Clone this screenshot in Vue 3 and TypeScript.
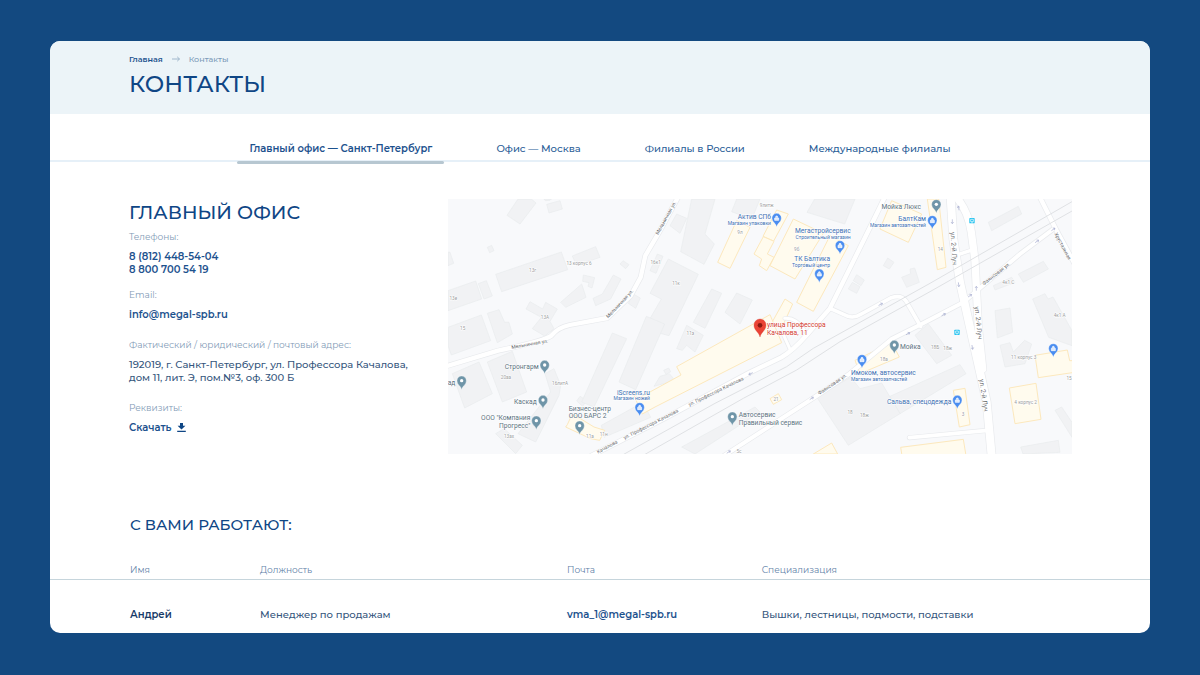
<script setup lang="ts">
import { ref } from 'vue'

interface Label {
  x: number
  y: number
  text: string
  kind: 'shop' | 'shop small' | 'place' | 'house' | 'street' | 'target'
  anchor?: 'start' | 'middle' | 'end'
  turn?: number
}

interface Pin {
  x: number
  y: number
  shop?: boolean
}

const tabs: string[] = [
  'Главный офис — Санкт-Петербург',
  'Офис — Москва',
  'Филиалы в России',
  'Международные филиалы',
]
const activeTab = ref<number>(0)

const staff = [
  {
    name: 'Андрей',
    role: 'Менеджер по продажам',
    mail: 'vma_1@megal-spb.ru',
    area: 'Вышки, лестницы, подмости, подставки',
  },
]

const greyHouses: string[] = [
  '210,0 250,0 264,12 216,75 177,49',
  '296,16 336,5 343,30 303,42',
  '288,0 310,0 306,4 292,5',
  '118,145 131,139 138,155 125,161',
  '0,160 6,160 17,193 0,200',
  '143,226 340,159 359,212 161,278',
  '373,171 443,143 456,175 385,199',
  '0,275 83,246 101,300 0,335',
  '91,254 115,245 133,291 108,300',
  '338,310 401,255 414,295 353,325',
  '406,228 440,236 432,267 420,262 423,251 404,247',
  '435,298 463,285 496,228 519,240 488,300 443,320',
  '516,195 525,185 543,197 533,209',
  '606,215 628,165 645,172 624,223',
  '541,313 556,285 577,297 563,328',
  '246,308 284,330 293,310 328,330 306,367 318,389 290,411 253,389 280,355 234,330',
  '118,343 153,332 170,370 183,370 193,405 148,431',
  '0,385 100,348 128,425 10,468 0,440',
  '666,80 686,45 716,58 696,103',
  '731,0 801,0 771,105 799,135 768,196 698,158',
  '866,0 936,0 911,61 851,38',
  '1100,0 1221,0 1190,75 1077,40',
  '661,180 751,226 663,410 588,390 640,300 606,283',
  '686,449 716,379 766,409 741,459 716,439 703,454',
  '736,370 791,270 821,283 771,388',
  '831,340 866,282 913,303 876,375',
  '1216,245 1226,227 1249,243 1239,260',
  '1201,270 1213,250 1236,263 1226,283',
  '1621,70 1711,22 1721,45 1631,95',
  '1306,200 1319,177 1338,190 1324,210',
  '1361,235 1388,224 1386,210 1400,207 1414,250 1376,265',
  '1711,225 1786,187 1801,210 1726,250',
  '1636,260 1691,235 1701,250 1641,273',
  '1754,300 1791,284 1800,300 1815,294 1872,395 1872,440 1802,415',
  '1641,335 1686,327 1694,400 1648,417',
  '1401,409 1441,374 1511,469 1466,494',
  '1656,439 1686,431 1696,459 1730,424 1751,435 1731,494 1671,504',
  '1326,592 1536,497 1554,524 1356,644',
  '1106,594 1208,535 1236,569 1301,552 1356,644 1201,739',
  '1821,634 1841,624 1872,670 1872,715',
  '1718,744 1831,724 1836,760 1725,765',
  '13,524 93,489 133,584 50,627',
  '118,489 193,457 236,579 163,609',
  '291,524 318,509 338,559 333,589 263,729 210,704 308,579',
  '143,704 168,689 223,739 203,764',
  '386,606 396,592 416,604 404,622',
  '401,609 493,402 536,419 438,624',
  '513,549 595,352 650,375 563,572',
  '460,679 585,610 608,655 468,715',
  '701,744 921,624 936,639 741,765',
  '618,562 636,532 664,524 676,538 668,548',
  '647,514 662,507 668,518 654,526',
]

const yellowHouses: string[] = [
  '866,65 906,85 846,208 809,190',
  '986,33 1021,45 977,126 945,112',
  '946,113 978,127 958,165 978,175 956,215 934,200 941,180 918,165',
  '1036,60 1126,103 1041,240 966,200',
  '1146,110 1201,140 1096,337 1046,310',
  '1011,300 1034,315 1001,387 971,372',
  '553,579 571,598 699,528 686,503 966,347 1001,431 621,624 583,645',
  '358,677 373,644 438,684 470,694 455,724 428,719 353,684',
  '1296,90 1331,5 1421,45 1381,130',
  '1438,0 1472,0 1494,205 1468,212',
  '966,599 991,584 1001,602 976,616',
  '1096,765 1151,732 1169,765',
  '1221,484 1331,431 1354,474 1236,524',
  '1516,574 1551,568 1566,677 1534,684',
  '1684,567 1764,553 1779,661 1701,674',
  '1761,469 1858,453 1865,485 1880,485 1880,520 1771,536',
  '1358,745 1546,721 1554,770 1362,770',
]

const roads: { d: string; width: number }[] = [
  { d: 'M-10 503 L150 455 Q290 425 310 410 Q330 385 365 378 L478 357 L548 290 L578 235 L592 170 L636 95 L690 -5', width: 13 },
  { d: 'M430 770 L648 659 L906 520 L1000 475 Q1035 455 1076 408 L1146 328 L1281 55 L1310 -5', width: 13 },
  { d: 'M1010 358 Q1045 355 1070 395 M1004 402 L1028 455', width: 9 },
  { d: 'M1146 328 L1200 352 Q1220 358 1240 345 L1330 296 Q1360 286 1374 306 L1418 382', width: 11 },
  { d: 'M828 770 L1101 594 L1205 524 L1331 420 L1421 375 L1546 310 L1716 165 L1816 90', width: 12 },
  { d: 'M1776 -5 L1826 95 L1880 195', width: 13 },
  { d: 'M1521 170 L1575 152', width: 10 },
  { d: 'M1384 716 L1620 694', width: 11 },
  { d: 'M1508 -5 L1516 120 L1536 250 L1566 385 L1596 519 L1616 609 L1631 770', width: 24 },
  { d: 'M1526 -5 Q1562 40 1570 100 L1581 185 L1591 385 L1604 510', width: 22 },
]

const rails: string[] = [
  'M1872 8 L1446 253 L1096 448 L1016 503 L801 613 L520 770',
  'M1872 36 L1446 278 L1176 428 L1046 513 L886 598 L584 770',
]

const arrows: [number, number, number][] = [
  [1513, 68, 90], [1532, 27, -100], [1532, 257, 82], [1585, 268, -90],
  [1566, 290, -35], [1487, 347, -28], [1298, 316, -28], [1380, 404, -28],
  [1767, 127, -35], [1816, 91, -35], [1573, 445, 80], [908, 524, 155],
  [1091, 598, -33], [842, 759, -33],
]

const labels: Label[] = [
  { x: 969, y: 60, text: 'Актив СПб', kind: 'shop', anchor: 'end' },
  { x: 969, y: 78, text: 'Магазин упаковки', kind: 'shop small', anchor: 'end' },
  { x: 1208, y: 101, text: 'Мегастройсервис', kind: 'shop', anchor: 'end' },
  { x: 1208, y: 119, text: 'Строительный магазин', kind: 'shop small', anchor: 'end' },
  { x: 1146, y: 185, text: 'ТК Балтика', kind: 'shop', anchor: 'end' },
  { x: 1146, y: 203, text: 'Торговый центр', kind: 'shop small', anchor: 'end' },
  { x: 1434, y: 67, text: 'БалтКам', kind: 'shop', anchor: 'end' },
  { x: 1434, y: 85, text: 'Магазин автозапчастей', kind: 'shop small', anchor: 'end' },
  { x: 606, y: 587, text: 'iScreens.ru', kind: 'shop', anchor: 'end' },
  { x: 606, y: 604, text: 'Магазин ножей', kind: 'shop small', anchor: 'end' },
  { x: 1209, y: 528, text: 'Имоком, автосервис', kind: 'shop' },
  { x: 1209, y: 545, text: 'Магазин автозапчастей', kind: 'shop small' },
  { x: 1510, y: 614, text: 'Сальва, спецодежда', kind: 'shop', anchor: 'end' },
  { x: 1419, y: 30, text: 'Мойка Люкс', kind: 'place', anchor: 'end' },
  { x: 272, y: 510, text: 'Стронгарм', kind: 'place', anchor: 'end' },
  { x: 22, y: 557, text: 'ад', kind: 'place', anchor: 'end' },
  { x: 266, y: 614, text: 'Каскад', kind: 'place', anchor: 'end' },
  { x: 247, y: 664, text: 'ООО "Компания', kind: 'place', anchor: 'end' },
  { x: 247, y: 687, text: 'Прогресс"', kind: 'place', anchor: 'end' },
  { x: 362, y: 635, text: 'Бизнес-центр', kind: 'place' },
  { x: 362, y: 657, text: 'ООО БАРС 2', kind: 'place' },
  { x: 872, y: 655, text: 'Автосервис', kind: 'place' },
  { x: 872, y: 677, text: 'Правильный сервис', kind: 'place' },
  { x: 1356, y: 449, text: 'Мойка', kind: 'place' },
  { x: 957, y: 384, text: 'улица Профессора', kind: 'target' },
  { x: 957, y: 407, text: 'Качалова, 11', kind: 'target' },
  { x: 393, y: 199, text: '13 корпус 6', kind: 'house', anchor: 'middle' },
  { x: 254, y: 220, text: '13г', kind: 'house', anchor: 'middle' },
  { x: 16, y: 302, text: '13е', kind: 'house', anchor: 'middle' },
  { x: 291, y: 359, text: '13А', kind: 'house', anchor: 'middle' },
  { x: 44, y: 393, text: '15', kind: 'house', anchor: 'middle' },
  { x: 623, y: 195, text: '16к1', kind: 'house', anchor: 'middle' },
  { x: 956, y: 24, text: '9литж', kind: 'house', anchor: 'middle' },
  { x: 876, y: 106, text: '9л', kind: 'house', anchor: 'middle' },
  { x: 1046, y: 157, text: '9б', kind: 'house', anchor: 'middle' },
  { x: 684, y: 258, text: '11к', kind: 'house', anchor: 'middle' },
  { x: 727, y: 408, text: '11з', kind: 'house', anchor: 'middle' },
  { x: 1477, y: 157, text: '14', kind: 'house', anchor: 'middle' },
  { x: 1681, y: 255, text: '4к1 С', kind: 'house', anchor: 'middle' },
  { x: 1835, y: 355, text: '4к1 А', kind: 'house', anchor: 'middle' },
  { x: 174, y: 540, text: '20аа', kind: 'house', anchor: 'middle' },
  { x: 336, y: 559, text: '16литА', kind: 'house', anchor: 'middle' },
  { x: 183, y: 716, text: '13ах', kind: 'house', anchor: 'middle' },
  { x: 426, y: 717, text: '11а', kind: 'house', anchor: 'middle' },
  { x: 467, y: 711, text: '11н', kind: 'house', anchor: 'middle' },
  { x: 984, y: 605, text: '21', kind: 'house', anchor: 'middle' },
  { x: 1206, y: 644, text: '18', kind: 'house', anchor: 'middle' },
  { x: 1249, y: 654, text: '18ж', kind: 'house', anchor: 'middle' },
  { x: 1308, y: 486, text: '18а', kind: 'house', anchor: 'middle' },
  { x: 1461, y: 450, text: '18Б', kind: 'house', anchor: 'middle' },
  { x: 1499, y: 454, text: '18ж', kind: 'house', anchor: 'middle' },
  { x: 1727, y: 480, text: '11 корпус 3', kind: 'house', anchor: 'middle' },
  { x: 1733, y: 616, text: '4 корпус 2', kind: 'house', anchor: 'middle' },
  { x: 1545, y: 650, text: '3', kind: 'house', anchor: 'middle' },
  { x: 1863, y: 543, text: '15', kind: 'house', anchor: 'middle' },
  { x: 873, y: 763, text: '5с', kind: 'house', anchor: 'middle' },
  { x: 519, y: 318, text: 'Мельничная ул.', kind: 'street', anchor: 'middle', turn: -47 },
  { x: 246, y: 440, text: 'Мельничная ул.', kind: 'street', anchor: 'middle', turn: -10 },
  { x: 631, y: 108, text: 'Мельничная ул.', kind: 'street', turn: -61 },
  { x: 806, y: 582, text: 'ул. Профессора Качалова', kind: 'street', anchor: 'middle', turn: -26 },
  { x: 611, y: 680, text: 'ул. Профессора Качалова', kind: 'street', anchor: 'middle', turn: -27 },
  { x: 480, y: 748, text: 'Качалова', kind: 'street', anchor: 'middle', turn: -28 },
  { x: 1156, y: 560, text: 'Фаянсовая ул.', kind: 'street', anchor: 'middle', turn: -34 },
  { x: 1648, y: 228, text: 'Фаянсовая ул.', kind: 'street', anchor: 'middle', turn: -38 },
  { x: 1840, y: 144, text: 'Хрустальная', kind: 'street', anchor: 'middle', turn: 62 },
]

const avenueLabels = [
  { x: 1511, y: 149, turn: 86 },
  { x: 1585, y: 372, turn: 84 },
  { x: 1601, y: 590, turn: 82 },
]

const pins: Pin[] = [
  { x: 986, y: 58, shop: true },
  { x: 1176, y: 140, shop: true },
  { x: 1114, y: 225, shop: true },
  { x: 1453, y: 65, shop: true },
  { x: 575, y: 626, shop: true },
  { x: 1242, y: 482, shop: true },
  { x: 1528, y: 604, shop: true },
  { x: 1816, y: 449, shop: true },
  { x: 1465, y: 17 },
  { x: 290, y: 499 },
  { x: 41, y: 546 },
  { x: 285, y: 604 },
  { x: 265, y: 666 },
  { x: 395, y: 681 },
  { x: 853, y: 654 },
  { x: 1339, y: 439 },
]

const stops: [number, number][] = [[1572, 65], [1527, 400]]
</script>

<template>
  <div class="page">
    <main class="card">
      <header class="head">
        <nav class="crumbs" aria-label="Навигация">
          <a href="#" class="crumb-home">Главная</a>
          <svg class="crumb-arrow" viewBox="0 0 8 6" aria-hidden="true">
            <path d="M0 3 H7.4 M5.2 0.8 L7.5 3 L5.2 5.2" />
          </svg>
          <span>Контакты</span>
        </nav>
        <h1>КОНТАКТЫ</h1>
      </header>

      <div class="tabs" role="tablist">
        <button
          v-for="(tab, i) in tabs"
          :key="tab"
          type="button"
          role="tab"
          class="tab"
          :class="{ active: i === activeTab }"
          :aria-selected="i === activeTab"
          @click="activeTab = i"
        >{{ tab }}</button>
      </div>

      <section class="office">
        <div class="details">
          <h2>ГЛАВНЫЙ ОФИС</h2>
          <dl>
            <dt>Телефоны:</dt>
            <dd class="tight">
              <a href="tel:+78124485404">8 (812) 448-54-04</a>
              <a href="tel:88007005419">8 800 700 54 19</a>
            </dd>
            <dt>Email:</dt>
            <dd><a href="mailto:info@megal-spb.ru">info@megal-spb.ru</a></dd>
            <dt>Фактический / юридический / почтовый адрес:</dt>
            <dd class="address">
              192019, г. Санкт-Петербург, ул. Профессора Качалова,<br />дом 11, лит. Э, пом.№3, оф. 300 Б
            </dd>
            <dt>Реквизиты:</dt>
            <dd>
              <a href="#" class="download">
                Скачать
                <svg viewBox="0 0 9 9" aria-hidden="true">
                  <path d="M3 0 H6 V2.8 H8.4 L4.5 6.6 L0.6 2.8 H3 Z M0.2 7.8 H8.8 V9 H0.2 Z" />
                </svg>
              </a>
            </dd>
          </dl>
        </div>

        <svg class="map" viewBox="0 0 1872 765" role="img" aria-label="Карта">
          <rect width="1872" height="765" class="ground" />
          <polygon v-for="p in greyHouses" :key="p" :points="p" class="grey" />
          <polygon v-for="p in yellowHouses" :key="p" :points="p" class="yellow" />
          <path v-for="r in roads" :key="'e' + r.d" :d="r.d" class="road-edge" :stroke-width="r.width + 4" />
          <path v-for="r in roads" :key="r.d" :d="r.d" class="road" :stroke-width="r.width" />
          <path v-for="d in rails" :key="d" :d="d" class="rail" />
          <path
            v-for="(a, i) in arrows"
            :key="'a' + i"
            d="M-7 0 H6 M1 -4 L6 0 L1 4"
            class="arrow"
            :transform="`translate(${a[0]} ${a[1]}) rotate(${a[2]})`"
          />
          <g v-for="s in stops" :key="s[0]" :transform="`translate(${s[0]} ${s[1]})`">
            <rect x="-8" y="-8" width="16" height="16" rx="2" class="stop" />
            <path d="M-4 -4 H4 V3 H-4 Z M-3 5 H-1 M1 5 H3" class="stop-mark" />
          </g>
          <g v-for="p in pins" :key="p.x + '-' + p.y" :transform="`translate(${p.x} ${p.y})`">
            <path
              d="M0 26 C-2 14 -14 12 -14 -1 A14 14 0 0 1 14 -1 C14 12 2 14 0 26 Z"
              :class="p.shop ? 'pin-shop' : 'pin-place'"
            />
            <path v-if="p.shop" d="M-6 -1 H6 V6 H-6 Z M-3 -2 V-4 A3 3 0 0 1 3 -4 V-2" class="bag" />
            <circle v-else cy="-1" r="5" class="pin-dot" />
          </g>
          <text
            v-for="(l, i) in labels"
            :key="i"
            :class="l.kind"
            :text-anchor="l.anchor ?? 'start'"
            :transform="`translate(${l.x} ${l.y}) rotate(${l.turn ?? 0})`"
          >{{ l.text }}</text>
          <text
            v-for="a in avenueLabels"
            :key="a.y"
            class="avenue"
            text-anchor="middle"
            :transform="`translate(${a.x} ${a.y}) rotate(${a.turn})`"
          >ул. 2-й Луч</text>
          <path
            d="M936 414 C933 399 918 395 918 378 A18 18 0 0 1 954 378 C954 395 939 399 936 414 Z"
            class="pin-target"
          />
          <circle cx="936" cy="379" r="7" class="pin-core" />
        </svg>
      </section>

      <section class="team">
        <h3>С ВАМИ РАБОТАЮТ:</h3>
        <table>
          <colgroup>
            <col class="c-name" />
            <col class="c-role" />
            <col class="c-mail" />
            <col />
          </colgroup>
          <thead>
            <tr>
              <th scope="col">Имя</th>
              <th scope="col">Должность</th>
              <th scope="col">Почта</th>
              <th scope="col">Специализация</th>
            </tr>
          </thead>
          <tbody>
            <tr v-for="s in staff" :key="s.mail">
              <td class="name">{{ s.name }}</td>
              <td>{{ s.role }}</td>
              <td><a :href="'mailto:' + s.mail">{{ s.mail }}</a></td>
              <td>{{ s.area }}</td>
            </tr>
          </tbody>
        </table>
      </section>
    </main>
  </div>
</template>

<style>
body {
  margin: 0;
  background: #134980;
}
</style>

<style scoped>
.page {
  box-sizing: border-box;
  min-height: 100vh;
  padding: 41px 50px 42px;
  background: #134980;
  font-family: Montserrat, Inter, "Noto Sans", sans-serif;
  font-size: 10px;
  font-weight: 500;
  line-height: 16px;
  color: #34557c;
}
.card {
  background: #fff;
  border-radius: 10px;
  overflow: hidden;
}
a {
  color: #1d528e;
  text-decoration: none;
}
h1,
h2,
h3 {
  margin: 0;
  font-weight: 500;
  color: #0f4685;
}

.head {
  padding: 10px 79px 14px;
  background: #ecf4f8;
}
.crumbs {
  display: flex;
  align-items: center;
  gap: 9px;
  font-size: 8px;
  color: #7d9bb8;
}
.crumb-home {
  font-weight: 600;
}
.crumb-arrow {
  width: 8px;
  height: 6px;
  fill: none;
  stroke: #8fa9c2;
  stroke-width: 0.8;
}
h1 {
  margin-top: 1px;
  font-size: 23px;
  line-height: 32px;
}

.tabs {
  display: flex;
  justify-content: center;
  gap: 40px;
  border-bottom: 2px solid #e6f0f8;
}
.tab {
  position: relative;
  padding: 27px 12px 3px;
  border: 0;
  background: none;
  font: inherit;
  color: #2a5d97;
  cursor: pointer;
}
.tab.active {
  font-weight: 600;
  color: #1d528e;
}
.tab.active::after {
  content: "";
  position: absolute;
  left: 0;
  right: 0;
  bottom: -4px;
  height: 3px;
  border-radius: 2px;
  background: #b7c7d1;
}

.office {
  display: grid;
  grid-template-columns: 319px 1fr;
  align-items: start;
  padding: 37px 78px 0 79px;
}
h2 {
  font-size: 19px;
  line-height: 28px;
}
dl {
  margin: 2px 0 0;
}
dt {
  margin-bottom: 5px;
  font-size: 9px;
  font-weight: 400;
  color: #7f9ab6;
}
dd {
  margin: 0 0 16px;
  line-height: 13px;
}
dd.tight {
  margin-bottom: 11px;
}
dd a {
  display: block;
  font-weight: 600;
}
.address {
  white-space: nowrap;
}
dd .download {
  display: flex;
  align-items: center;
  gap: 6px;
}
.download svg {
  width: 9px;
  height: 9px;
  fill: #0f4685;
}

.map {
  display: block;
  width: 100%;
  height: auto;
  font-family: Roboto, "Noto Sans", sans-serif;
  font-weight: 400;
}
.ground { fill: #f8f9fb; }
.grey { fill: #f1f2f4; stroke: #e9ebed; stroke-width: 2; }
.yellow { fill: #fffbee; stroke: #fce8bd; stroke-width: 3; }
.road-edge { fill: none; stroke: #e8eaed; stroke-linejoin: round; stroke-linecap: round; }
.road { fill: none; stroke: #fff; stroke-linejoin: round; stroke-linecap: round; }
.rail { fill: none; stroke: #dfe1e4; stroke-width: 3; }
.arrow { fill: none; stroke: #a9afd0; stroke-width: 2; }
.stop { fill: #25c3f0; }
.stop-mark { fill: none; stroke: #fff; stroke-width: 2; }
.pin-shop { fill: #4a8df0; stroke: #fff; stroke-width: 1; }
.pin-place { fill: #6f95a8; stroke: #fff; stroke-width: 1; }
.pin-dot { fill: #fff; }
.bag { fill: #fff; stroke: #fff; stroke-width: 2; fill-opacity: 0.8; }
.pin-target { fill: #ea4335; stroke: #d23a2d; stroke-width: 1; }
.pin-core { fill: #8c1a12; }
text {
  paint-order: stroke;
  stroke: #fff;
  stroke-width: 3px;
}
.shop { font-size: 20px; fill: #3d70b3; }
.shop.small { font-size: 15px; }
.place { font-size: 20px; fill: #5b7280; }
.target { font-size: 20px; fill: #d23a30; }
.house { font-size: 14px; fill: #9b9da0; }
.street { font-size: 15px; fill: #66686b; }
.avenue { font-size: 20px; fill: #6c6e71; }

.team {
  padding-top: 59px;
}
h3 {
  margin: 0 80px 25px;
  font-size: 15px;
  line-height: 24px;
}
table {
  width: 100%;
  table-layout: fixed;
  border-collapse: separate;
  border-spacing: 0;
}
.c-name { width: 19.1%; }
.c-role { width: 27.9%; }
.c-mail { width: 17.7%; }
th {
  padding: 0 0 1px;
  border-bottom: 1px solid #c6d5dc;
  text-align: left;
  font-size: 9px;
  font-weight: 400;
  color: #5f82a8;
}
td {
  padding: 27px 0 10px;
}
th:first-child,
td:first-child {
  padding-left: 80px;
}
td.name {
  font-weight: 600;
  color: #173a68;
}
td a {
  font-weight: 600;
}
</style>
